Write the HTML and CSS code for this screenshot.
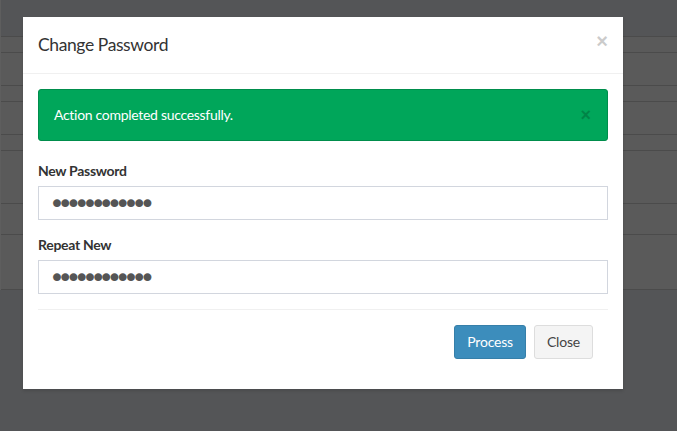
FILE: index.html
```html
<!DOCTYPE html>
<html lang="en">
<head>
    <meta charset="UTF-8">
    <meta name="viewport" content="width=device-width, initial-scale=1.0">
    <title>Change Password</title>
    <link rel="stylesheet" href="styles.css">
</head>
<body>
    <div class="page">
        <table class="bg-table">
            <tr class="short"><td></td></tr>
            <tr class="mid"><td></td></tr>
            <tr class="short"><td></td></tr>
            <tr class="mid"><td></td></tr>
            <tr class="short"><td></td></tr>
            <tr class="tall"><td></td></tr>
            <tr class="mid2"><td></td></tr>
            <tr class="tall2"><td></td></tr>
        </table>
    </div>

    <div class="modal">
        <div class="modal-header">
            <h4 class="modal-title">Change Password</h4>
            <button class="close">&times;</button>
        </div>
        <div class="modal-body">
            <div class="alert">
                <span>Action completed successfully.</span>
                <button class="close alert-close">&times;</button>
            </div>
            <div class="form-group">
                <label for="new-pass">New Password</label>
                <input type="password" id="new-pass" class="form-control" value="secretpass12">
            </div>
            <div class="form-group">
                <label for="repeat-pass">Repeat New</label>
                <input type="password" id="repeat-pass" class="form-control" value="secretpass12">
            </div>
            <div class="modal-footer">
                <button class="btn btn-primary">Process</button>
                <button class="btn btn-default">Close</button>
            </div>
        </div>
    </div>
</body>
</html>
```

FILE: styles.css
```css
body {
    font-family: Lato, "Noto Sans", sans-serif;
    font-size: 14px;
    letter-spacing: -0.3px;
    margin: 0;
    padding: 0;
    background-color: #545557;
    color: #333;
    height: 431px;
    overflow: hidden;
}
.page {
    padding-top: 36px;
    border-left: 1px solid #5e5e5e;
}
.bg-table {
    width: 100%;
    border-collapse: collapse;
    background-color: #5a5a5a;
}
.bg-table td {
    border-top: 1px solid #4b4b4b;
    padding: 0;
}
.bg-table tr:last-child td {
    border-bottom: 1px solid #4b4b4b;
}
.bg-table .short td { height: 15px; }
.bg-table .mid td { height: 32px; }
.bg-table .tall td { height: 52px; }
.bg-table .mid2 td { height: 30px; }
.bg-table .tall2 td { height: 54px; }

.modal {
    position: absolute;
    top: 17px;
    left: 23px;
    width: 600px;
    background: #fff;
    box-shadow: 0 2px 3px rgba(0, 0, 0, 0.125);
}
.modal-header {
    display: flex;
    justify-content: space-between;
    align-items: center;
    padding: 15px;
    border-bottom: 1px solid #f0f0f0;
}
.modal-title {
    margin: 0;
    font-size: 17.5px;
    font-weight: 400;
    line-height: 26px;
    letter-spacing: -0.4px;
    color: #333;
}
.close {
    background: none;
    border: none;
    padding: 0;
    font-family: "Liberation Sans", Arial, sans-serif;
    font-size: 20px;
    font-weight: bold;
    line-height: 1;
    letter-spacing: 0;
    color: #000;
    opacity: 0.2;
    cursor: pointer;
    margin-top: -8px;
    margin-right: 0;
}
.modal-body {
    padding: 15px;
}
.alert {
    display: flex;
    justify-content: space-between;
    align-items: center;
    padding: 15px;
    line-height: 20px;
    background-color: #00a65a;
    border: 1px solid #008d4c;
    border-radius: 3px;
    color: #fff;
    margin-bottom: 20px;
}
.alert-close {
    margin: 0 1px 0 0;
    font-size: 18px;
}
.form-group {
    margin-bottom: 15px;
}
.form-group label {
    display: block;
    font-weight: bold;
    line-height: 20px;
    margin-bottom: 5px;
    color: #333;
}
.form-control {
    display: block;
    box-sizing: border-box;
    width: 100%;
    height: 34px;
    padding: 0 12px 0 10px;
    font-family: "DejaVu Sans", sans-serif;
    font-size: 27px;
    line-height: 32px;
    letter-spacing: -7.7px;
    color: #555;
    border: 1px solid #d2d6de;
    border-radius: 0;
    outline: none;
}
.modal-footer {
    display: flex;
    justify-content: flex-end;
    gap: 8px;
    border-top: 1px solid #f0f0f0;
    padding: 15px;
}
.btn {
    font-family: Lato, "Noto Sans", sans-serif;
    font-size: 14px;
    line-height: 20px;
    letter-spacing: -0.2px;
    padding: 6px 12px;
    border-radius: 3px;
    border: 1px solid transparent;
    cursor: pointer;
}
.btn-primary {
    background-color: #3c8dbc;
    border-color: #367fa9;
    color: #fff;
}
.btn-default {
    background-color: #f4f4f4;
    border-color: #ddd;
    color: #444;
}
```
